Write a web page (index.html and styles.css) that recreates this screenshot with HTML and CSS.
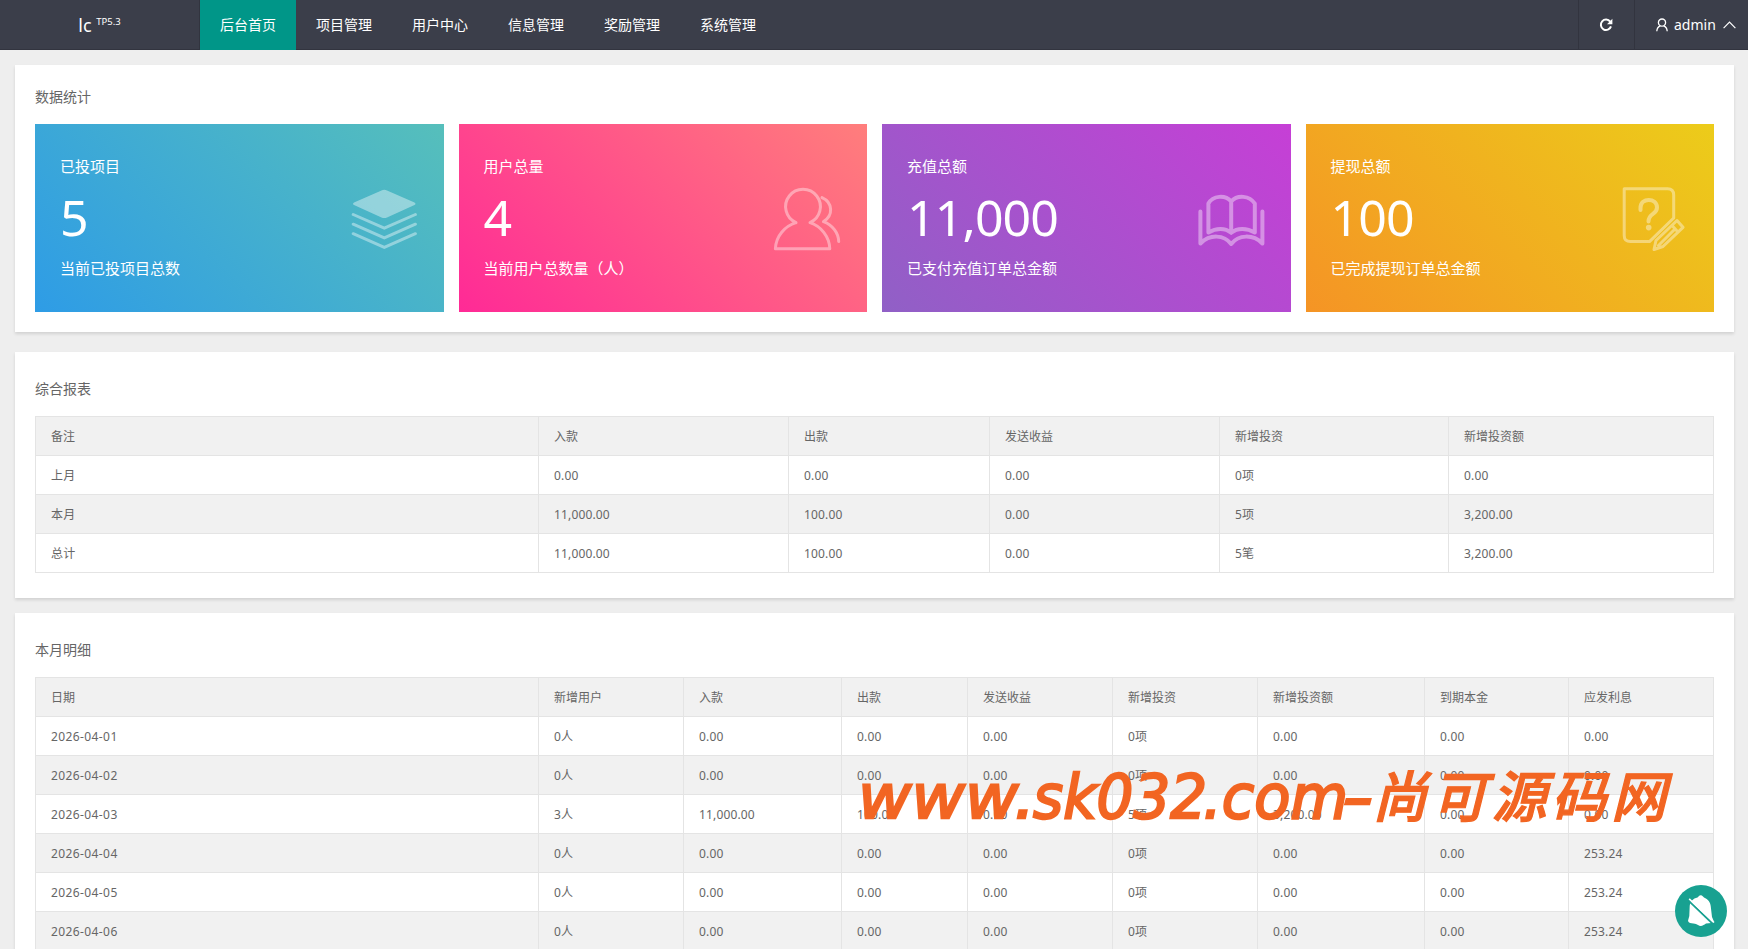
FILE: index.html
```html
<!DOCTYPE html>
<html lang="zh-CN">
<head>
    <meta charset="UTF-8">
    <meta name="viewport" content="width=device-width, initial-scale=1.0">
    <title>后台首页</title>
    <link rel="stylesheet" href="styles.css">
</head>
<body>
    <header class="header">
        <div class="logo">lc <sup>TP5.3</sup></div>
        <nav class="nav">
            <a class="nav-item active">后台首页</a>
            <a class="nav-item">项目管理</a>
            <a class="nav-item">用户中心</a>
            <a class="nav-item">信息管理</a>
            <a class="nav-item">奖励管理</a>
            <a class="nav-item">系统管理</a>
        </nav>
        <div class="tools">
            <a class="refresh">
                <svg width="14" height="14" viewBox="0 0 14 14"><path d="M11.200 3.600A5.200 5.200 0 1 0 12 8.400" fill="none" stroke="#fff" stroke-width="2"/><path d="M13.400.8v5.400H8z" fill="#fff"/></svg>
            </a>
            <a class="account">
                <svg width="12" height="14" viewBox="0 0 12 14" fill="none" stroke="#fff" stroke-width="1.3"><circle cx="6" cy="4.600" r="3.600"/><path d="M.8 13.200C1 10.400 2.300 8.600 4.400 7.900M11.200 13.200C11 10.400 9.700 8.600 7.600 7.900"/></svg>
                <span>admin</span>
                <svg class="caret" width="13" height="8" viewBox="0 0 13 8" fill="none" stroke="#fff" stroke-width="1.2"><path d="M.6 7.200 6.500 1.200l5.900 6"/></svg>
            </a>
        </div>
    </header>

    <main class="content">
        <section class="panel panel-stat">
            <h3>数据统计</h3>
            <div class="cards">
                <div class="card blue">
                    <div class="card-text">
                        <p>已投项目</p>
                        <strong>5</strong>
                        <p>当前已投项目总数</p>
                    </div>
                    <svg width="68" height="68" viewBox="0 0 68 68">
                        <path class="fill" d="M31.500 6.500Q34.300 5.100 37 6.500L64.500 18.400Q66.500 19.800 64.500 21.100L37 33.400Q34.300 34.600 31.500 33.400L4 21.100Q2 19.800 4 18.400Z"/>
                        <path d="M3.200 30.500 34.300 44.200 65.400 30.500M3.200 40.200 34.300 53.900 65.400 40.200M3.200 49.700 34.300 63.400 65.400 49.700"/>
                    </svg>
                </div>
                <div class="card pink">
                    <div class="card-text">
                        <p>用户总量</p>
                        <strong>4</strong>
                        <p>当前用户总数量（人）</p>
                    </div>
                    <svg width="68" height="68" viewBox="0 0 68 68">
                        <path d="M23 38.600A17.400 17.400 0 1 1 37 38.600C48 42 56.600 53 56.800 64.800H2.400C2.800 52 12 42 23 38.600M49 13.600C60 18.500 60.500 31.500 50.500 37.600 59.500 41 65.500 49 65.700 57.500"/>
                    </svg>
                </div>
                <div class="card purple">
                    <div class="card-text">
                        <p>充值总额</p>
                        <strong>11,000</strong>
                        <p>已支付充值订单总金额</p>
                    </div>
                    <svg width="68" height="68" viewBox="0 0 68 68" class="thick">
                        <path d="M34.200 17.500C28 10.500 16 11.500 11.400 19.500V48.500C19 44 28 43.500 34.200 48.800 40.400 43.500 50 44 57.800 48.500V19.500C52.500 11.500 40.400 10.500 34.200 17.500V48.500M3.400 27.500V59.500C13 50 27 50.500 34.200 60 41.400 50.500 56 50 65.400 59.500V27.500"/>
                    </svg>
                </div>
                <div class="card yellow">
                    <div class="card-text">
                        <p>提现总额</p>
                        <strong>100</strong>
                        <p>已完成提现订单总金额</p>
                    </div>
                    <svg width="68" height="68" viewBox="0 0 68 68">
                        <path d="M53.700 34V11Q53.700 4.700 47.500 4.700H4.200V51.500Q4.200 57.600 10.500 57.600H29.500L53.700 34"/>
                        <path class="mark" d="M20.500 26V24C20.500 13 37 13.500 37 23.500 37 31 28.500 29 28.500 37.500"/>
                        <circle class="fill" cx="28.700" cy="43.600" r="2.800"/>
                        <path d="M57 36.500 63 43.300 43 62.500 34 65.500 36 56.500ZM52 41.500 58 48M38.500 61.500 54.500 45.500"/>
                    </svg>
                </div>
            </div>
        </section>

        <section class="panel panel-report">
            <h3>综合报表</h3>
            <table class="report">
                <colgroup><col><col><col><col><col><col></colgroup>
                <thead>
                    <tr><th>备注</th><th>入款</th><th>出款</th><th>发送收益</th><th>新增投资</th><th>新增投资额</th></tr>
                </thead>
                <tbody>
                    <tr><td>上月</td><td>0.00</td><td>0.00</td><td>0.00</td><td>0项</td><td>0.00</td></tr>
                    <tr><td>本月</td><td>11,000.00</td><td>100.00</td><td>0.00</td><td>5项</td><td>3,200.00</td></tr>
                    <tr><td>总计</td><td>11,000.00</td><td>100.00</td><td>0.00</td><td>5笔</td><td>3,200.00</td></tr>
                </tbody>
            </table>
        </section>

        <section class="panel panel-detail">
            <h3>本月明细</h3>
            <table class="detail">
                <colgroup><col><col><col><col><col><col><col><col><col></colgroup>
                <thead>
                    <tr><th>日期</th><th>新增用户</th><th>入款</th><th>出款</th><th>发送收益</th><th>新增投资</th><th>新增投资额</th><th>到期本金</th><th>应发利息</th></tr>
                </thead>
                <tbody>
                    <tr><td>2026-04-01</td><td>0人</td><td>0.00</td><td>0.00</td><td>0.00</td><td>0项</td><td>0.00</td><td>0.00</td><td>0.00</td></tr>
                    <tr><td>2026-04-02</td><td>0人</td><td>0.00</td><td>0.00</td><td>0.00</td><td>0项</td><td>0.00</td><td>0.00</td><td>0.00</td></tr>
                    <tr><td>2026-04-03</td><td>3人</td><td>11,000.00</td><td>100.00</td><td>0.00</td><td>5项</td><td>3,200.00</td><td>0.00</td><td>0.00</td></tr>
                    <tr><td>2026-04-04</td><td>0人</td><td>0.00</td><td>0.00</td><td>0.00</td><td>0项</td><td>0.00</td><td>0.00</td><td>253.24</td></tr>
                    <tr><td>2026-04-05</td><td>0人</td><td>0.00</td><td>0.00</td><td>0.00</td><td>0项</td><td>0.00</td><td>0.00</td><td>253.24</td></tr>
                    <tr><td>2026-04-06</td><td>0人</td><td>0.00</td><td>0.00</td><td>0.00</td><td>0项</td><td>0.00</td><td>0.00</td><td>253.24</td></tr>
                </tbody>
            </table>
        </section>
    </main>

    <svg class="watermark" width="840" height="80" viewBox="0 0 840 80">
        <text class="wm-latin" x="7" y="58" textLength="177" lengthAdjust="spacingAndGlyphs">www.</text>
        <text class="wm-latin" x="182" y="58" textLength="174" lengthAdjust="spacingAndGlyphs">sk032</text>
        <text class="wm-latin" x="352" y="58" textLength="145" lengthAdjust="spacingAndGlyphs">.com</text>
        <text class="wm-latin" x="491" y="58" textLength="31" lengthAdjust="spacingAndGlyphs">-</text>
        <text class="wm-cjk" x="521" y="57" textLength="294" lengthAdjust="spacing">尚可源码网</text>
    </svg>

    <a class="notice">
        <svg width="28" height="32" viewBox="0 0 28 32">
            <path d="M11.500 1.500Q13.700-1 16 1.500L17 2.500C21 4 23.500 7.500 23.700 11L25 22 26.700 26Q26.500 28 24.500 28L19 28.500Q17.500 29.500 16.500 30 13.700 32 11 30 9.500 29 8 28.800L3 28Q.5 27 1.200 25L2.300 21 2.700 11C3.200 6.500 6 3.500 10.500 2.500Z" fill="#fff"/>
            <path d="M2 6 26.500 29.500" stroke="#18a191" stroke-width="1.800"/>
            <path d="M2.200 3.800 27 27.500" stroke="#fff" stroke-width="1.600"/>
        </svg>
    </a>
</body>
</html>
```
FILE: styles.css
```css
* {
    box-sizing: border-box;
    margin: 0;
    padding: 0;
}
body {
    height: 949px;
    overflow: hidden;
    background: #eee;
    color: #666;
    font: 14px/24px "Noto Sans", "Noto Sans CJK SC", sans-serif;
}
.header {
    display: flex;
    height: 50px;
    background: #3b3e4a;
    color: #fff;
    box-shadow: inset 0 -1px 0 #32343f;
}
.logo {
    width: 200px;
    line-height: 50px;
    text-align: center;
    font-size: 18px;
    border-right: 1px solid #32343f;
}
.logo sup {
    font-size: 9.5px;
    line-height: 0;
    vertical-align: 7px;
}
.nav {
    display: flex;
}
.nav-item {
    padding: 0 20px;
    line-height: 50px;
}
.nav-item.active {
    background: #009688;
}
.tools {
    display: flex;
    margin-left: auto;
}
.tools a {
    display: flex;
    align-items: center;
    border-left: 1px solid #32343f;
}
.refresh {
    width: 56px;
    padding-right: 2px;
    justify-content: center;
}
.account {
    width: 114px;
    padding-left: 21px;
}
.account span {
    margin: 0 7px 0 6px;
}
.content {
    padding: 15px 14px 0 15px;
}
.panel {
    padding: 20px;
    background: #fff;
    box-shadow: 0 2px 3px rgba(0, 0, 0, 0.12);
}
.panel h3 {
    margin-bottom: 15px;
    font-size: 14px;
    font-weight: 400;
}
.panel-stat {
    height: 267px;
    margin-bottom: 20px;
}
.panel-report,
.panel-detail {
    padding-top: 25px;
}
.panel-report {
    height: 246px;
    margin-bottom: 15px;
}
.cards {
    display: grid;
    grid-template-columns: repeat(4, 1fr);
    gap: 15px;
}
.card {
    display: flex;
    justify-content: space-between;
    align-items: center;
    height: 188px;
    padding: 0 26px 0 25px;
    color: #fff;
}
.card-text {
    padding-bottom: 2px;
}
.card p {
    font-size: 15px;
    line-height: 24px;
}
.card strong {
    display: block;
    font-size: 50px;
    font-weight: 400;
    line-height: 78px;
    letter-spacing: -0.9px;
}
.card svg {
    fill: none;
    stroke: #fff;
    stroke-width: 3;
    stroke-linecap: round;
    stroke-linejoin: round;
    opacity: 0.4;
}
.card svg .fill {
    fill: #fff;
    stroke: none;
}
.card .thick,
.card .mark {
    stroke-width: 4;
}
.blue {
    background: linear-gradient(45deg, #2e9ce6, #56bfbb);
}
.pink {
    background: linear-gradient(45deg, #ff2a96, #ff7e7c);
}
.purple {
    background: linear-gradient(45deg, #9060c6, #c63fd6);
}
.yellow {
    background: linear-gradient(45deg, #f59425, #eccc1a);
}
table {
    width: 100%;
    table-layout: fixed;
    border-collapse: collapse;
    font-size: 12px;
}
th,
td {
    height: 39px;
    padding: 1px 15px 0;
    border: 1px solid #e4e4e4;
    text-align: left;
    font-weight: 400;
    line-height: 20px;
}
td {
    letter-spacing: 0.15px;
}
.detail td:first-child {
    letter-spacing: 0.4px;
}
thead tr,
tbody tr:nth-child(even) {
    background: #f1f1f1;
}
.report col:nth-child(1) { width: 503px; }
.report col:nth-child(2) { width: 250px; }
.report col:nth-child(3) { width: 201px; }
.report col:nth-child(4) { width: 230px; }
.report col:nth-child(5) { width: 229px; }
.detail col:nth-child(1) { width: 503px; }
.detail col:nth-child(2) { width: 145px; }
.detail col:nth-child(3) { width: 158px; }
.detail col:nth-child(4) { width: 126px; }
.detail col:nth-child(5) { width: 145px; }
.detail col:nth-child(6) { width: 145px; }
.detail col:nth-child(7) { width: 167px; }
.detail col:nth-child(8) { width: 144px; }
.watermark {
    position: absolute;
    left: 851px;
    top: 760px;
    fill: #f26522;
}
.wm-latin {
    font: italic 61px "DejaVu Sans", sans-serif;
    stroke: #f26522;
    stroke-width: 2.4;
}
.wm-cjk {
    font: italic 500 55px "Noto Sans CJK SC", sans-serif;
    stroke: #f26522;
    stroke-width: 1.2;
}
.notice {
    position: fixed;
    right: 21px;
    bottom: 12px;
    display: flex;
    width: 52px;
    height: 52px;
    align-items: center;
    justify-content: center;
    border-radius: 50%;
    background: #18a191;
}
```
